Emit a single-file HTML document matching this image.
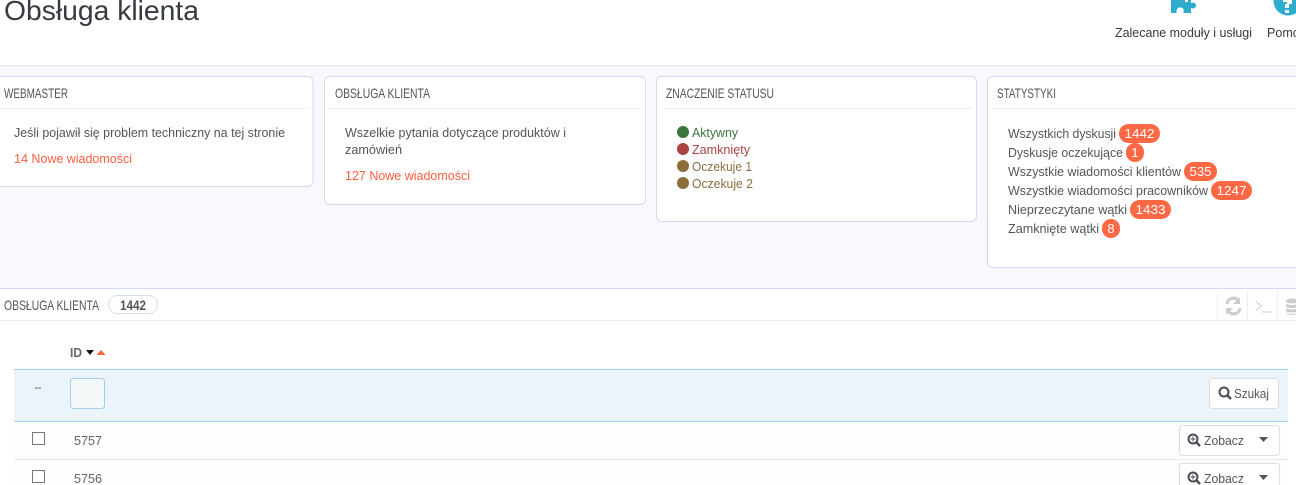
<!DOCTYPE html>
<html lang="pl">
<head>
<meta charset="utf-8">
<title>Obsługa klienta</title>
<style>
html,body{margin:0;padding:0;width:1296px;height:485px;overflow:hidden;background:#fff}
svg{display:block}
text{font-family:"Liberation Sans",sans-serif;font-size:13px;fill:#555}
.h{font-size:14px;fill:#555}
.o{fill:#ff5f3f}
.b{fill:#fff;font-size:13px;text-anchor:middle}
.card{fill:#fff;stroke:#d5daf2;stroke-width:1}
.badge{fill:#fe6845}
</style>
</head>
<body>
<svg width="1296" height="485" viewBox="0 0 1296 485" xmlns="http://www.w3.org/2000/svg">
<rect x="0" y="0" width="1296" height="485" fill="#fff"/>
<rect x="0" y="66" width="1296" height="223" fill="#f8f9ff"/>
<rect x="0" y="65" width="1296" height="1" fill="#dfe3ea"/>

<!-- header -->
<text x="4" y="20" style="font-size:28px;fill:#363a41" textLength="195" lengthAdjust="spacingAndGlyphs">Obsługa klienta</text>
<path d="M1171 0h20v13h-7.500v-2a3.500 3.500 0 0 0-7 0v2h-5.500z" fill="#2eacce"/>
<circle cx="1193" cy="5.500" r="3" fill="#2eacce"/>
<path d="M1177 11a3.500 3.500 0 1 1 7 0" fill="#fff"/>
<rect x="1185" y="0" width="3" height="2" fill="#fff"/>
<circle cx="1288" cy="1" r="14.500" fill="#2eacce"/>
<path d="M1283 0h9v4h-3v4h-4v-4h2v-2h-4z" fill="#fff"/>
<rect x="1285" y="10" width="4" height="3" fill="#fff"/>
<text x="1115" y="37" style="fill:#363a41" textLength="137" lengthAdjust="spacingAndGlyphs">Zalecane moduły i usługi</text>
<text x="1267" y="37" style="fill:#363a41" textLength="39" lengthAdjust="spacingAndGlyphs">Pomoc</text>

<!-- card 1 -->
<rect class="card" x="-20" y="76.500" width="333" height="110" rx="5"/>
<rect x="0" y="108" width="309" height="1" fill="#eeeff1"/>
<text class="h" x="4" y="98" textLength="64" lengthAdjust="spacingAndGlyphs">WEBMASTER</text>
<text x="14" y="137" textLength="271" lengthAdjust="spacingAndGlyphs">Jeśli pojawił się problem techniczny na tej stronie</text>
<text class="o" x="14" y="163" textLength="118" lengthAdjust="spacingAndGlyphs">14 Nowe wiadomości</text>

<!-- card 2 -->
<rect class="card" x="324.500" y="76.500" width="321" height="128" rx="5"/>
<rect x="330" y="108" width="310" height="1" fill="#eeeff1"/>
<text class="h" x="335" y="98" textLength="95" lengthAdjust="spacingAndGlyphs">OBSŁUGA KLIENTA</text>
<text x="345" y="137" textLength="221" lengthAdjust="spacingAndGlyphs">Wszelkie pytania dotyczące produktów i</text>
<text x="345" y="154" textLength="57" lengthAdjust="spacingAndGlyphs">zamówień</text>
<text class="o" x="345" y="180" textLength="125" lengthAdjust="spacingAndGlyphs">127 Nowe wiadomości</text>

<!-- card 3 -->
<rect class="card" x="656.500" y="76.500" width="320" height="145" rx="5"/>
<rect x="661" y="108" width="311" height="1" fill="#eeeff1"/>
<text class="h" x="666" y="98" textLength="108" lengthAdjust="spacingAndGlyphs">ZNACZENIE STATUSU</text>
<circle cx="683" cy="132" r="6" fill="#3c763d"/>
<circle cx="683" cy="149" r="6" fill="#a94442"/>
<circle cx="683" cy="166" r="6" fill="#8a6d3b"/>
<circle cx="683" cy="183" r="6" fill="#8a6d3b"/>
<text x="692" y="137" style="fill:#3c763d" textLength="46" lengthAdjust="spacingAndGlyphs">Aktywny</text>
<text x="692" y="154" style="fill:#a94442" textLength="58" lengthAdjust="spacingAndGlyphs">Zamknięty</text>
<text x="692" y="171" style="fill:#8a6d3b" textLength="60" lengthAdjust="spacingAndGlyphs">Oczekuje 1</text>
<text x="692" y="188" style="fill:#8a6d3b" textLength="61" lengthAdjust="spacingAndGlyphs">Oczekuje 2</text>

<!-- card 4 -->
<rect class="card" x="987.500" y="76.500" width="330" height="191" rx="5"/>
<rect x="992" y="108" width="304" height="1" fill="#eeeff1"/>
<text class="h" x="997" y="98" textLength="59" lengthAdjust="spacingAndGlyphs">STATYSTYKI</text>
<text x="1008" y="138" textLength="108" lengthAdjust="spacingAndGlyphs">Wszystkich dyskusji</text>
<text x="1008" y="157" textLength="115" lengthAdjust="spacingAndGlyphs">Dyskusje oczekujące</text>
<text x="1008" y="176" textLength="173" lengthAdjust="spacingAndGlyphs">Wszystkie wiadomości klientów</text>
<text x="1008" y="195" textLength="200" lengthAdjust="spacingAndGlyphs">Wszystkie wiadomości pracowników</text>
<text x="1008" y="214" textLength="119" lengthAdjust="spacingAndGlyphs">Nieprzeczytane wątki</text>
<text x="1008" y="233" textLength="91" lengthAdjust="spacingAndGlyphs">Zamknięte wątki</text>
<rect class="badge" x="1119" y="124" width="41" height="19" rx="9.500"/>
<rect class="badge" x="1126" y="143" width="18" height="19" rx="9"/>
<rect class="badge" x="1184" y="162" width="33" height="19" rx="9.500"/>
<rect class="badge" x="1211" y="181" width="41" height="19" rx="9.500"/>
<rect class="badge" x="1130" y="200" width="41" height="19" rx="9.500"/>
<rect class="badge" x="1102" y="219" width="18" height="19" rx="9"/>
<text class="b" x="1139.500" y="138" textLength="30" lengthAdjust="spacingAndGlyphs">1442</text>
<text class="b" x="1135" y="157">1</text>
<text class="b" x="1200.500" y="176" textLength="22" lengthAdjust="spacingAndGlyphs">535</text>
<text class="b" x="1231.500" y="195" textLength="30" lengthAdjust="spacingAndGlyphs">1247</text>
<text class="b" x="1150.500" y="214" textLength="30" lengthAdjust="spacingAndGlyphs">1433</text>
<text class="b" x="1111" y="233">8</text>

<!-- panel -->
<rect x="0" y="289" width="1296" height="196" fill="#fff"/>
<rect x="0" y="288" width="1296" height="1" fill="#d5daf2"/>
<rect x="0" y="320" width="1296" height="1" fill="#eeeff1"/>
<text class="h" x="4" y="310" textLength="95" lengthAdjust="spacingAndGlyphs">OBSŁUGA KLIENTA</text>
<rect x="108.500" y="295.500" width="49" height="18" rx="9" fill="#fff" stroke="#dcdfe3"/>
<text x="120" y="310" style="font-size:14px;font-weight:bold;fill:#555" textLength="26" lengthAdjust="spacingAndGlyphs">1442</text>

<rect x="1217" y="291" width="1" height="29" fill="#eeeff1"/>
<rect x="1247" y="291" width="1" height="29" fill="#eeeff1"/>
<rect x="1277" y="291" width="1" height="29" fill="#eeeff1"/>
<path d="M1227 304a6.500 6.500 0 0 1 11-4" fill="none" stroke="#ccc" stroke-width="3"/>
<path d="M1240 308a6.500 6.500 0 0 1-11 4" fill="none" stroke="#ccc" stroke-width="3"/>
<path d="M1240 297v7h-7zM1226 315v-7h7z" fill="#ccc"/>
<path d="M1255.500 301l6 5-6 5M1262 312h9" fill="none" stroke="#ccc" stroke-width="1"/>
<ellipse cx="1292" cy="301" rx="6" ry="2.500" fill="#ccc"/>
<path d="M1286 303.500c2 2 10 2 12 0v3c-2 2-10 2-12 0zM1286 308c2 2 10 2 12 0v3c-2 2-10 2-12 0zM1286 312.500c2 2 10 2 12 0v1c-2 2-10 2-12 0z" fill="#ccc"/>

<!-- table head -->
<text x="70" y="357" style="font-weight:bold;fill:#656565" textLength="12" lengthAdjust="spacingAndGlyphs">ID</text>
<path d="M86 350h8l-4 5z" fill="#111"/>
<path d="M96.500 355h9l-4.500-5z" fill="#ff5f3f"/>

<!-- filter row -->
<rect x="14" y="369" width="1274" height="53" fill="#ebf4fa"/>
<rect x="14" y="369" width="1274" height="1" fill="#a0d0eb"/>
<rect x="14" y="421" width="1274" height="1" fill="#a0d0eb"/>
<text x="34.500" y="391" style="font-size:11px;fill:#444" textLength="7">- -</text>
<rect x="70.500" y="378.500" width="34" height="30" rx="3" fill="#f5f8f9" stroke="#a0d0eb"/>
<rect x="1209.500" y="378.500" width="69" height="30" rx="3" fill="#fff" stroke="#dcdfe3"/>
<circle cx="1224" cy="392" r="4.500" fill="none" stroke="#4a4f55" stroke-width="2"/>
<path d="M1227.500 395.500l3.500 3.500" stroke="#4a4f55" stroke-width="2.500"/>
<text x="1234" y="398" style="fill:#555" textLength="35" lengthAdjust="spacingAndGlyphs">Szukaj</text>

<!-- rows -->
<rect x="14" y="422" width="1274" height="37" fill="#fcfdfe"/>
<rect x="14" y="459" width="1274" height="1" fill="#eaedef"/>
<rect x="14" y="460" width="1274" height="25" fill="#fcfdfe"/>

<rect x="32.500" y="432.500" width="12" height="12" fill="#fff" stroke="#777"/>
<rect x="32.500" y="470.500" width="12" height="12" fill="#fff" stroke="#777"/>
<text x="74" y="445" style="fill:#666" textLength="28" lengthAdjust="spacingAndGlyphs">5757</text>
<text x="74" y="483" style="fill:#666" textLength="28" lengthAdjust="spacingAndGlyphs">5756</text>

<rect x="1179.500" y="425.500" width="100" height="30" rx="3" fill="#fff" stroke="#dcdfe3"/>
<circle cx="1193" cy="439" r="4.500" fill="none" stroke="#4a4f55" stroke-width="2"/>
<path d="M1196.500 442.500l3.500 3.500" stroke="#4a4f55" stroke-width="2.500"/>
<path d="M1190.500 439h5M1193 436.500v5" stroke="#4a4f55" stroke-width="1"/>
<text x="1204" y="445" style="fill:#555" textLength="40" lengthAdjust="spacingAndGlyphs">Zobacz</text>
<path d="M1259 437h9l-4.500 5z" fill="#555"/>

<rect x="1179.500" y="463.500" width="100" height="30" rx="3" fill="#fff" stroke="#dcdfe3"/>
<circle cx="1193" cy="477" r="4.500" fill="none" stroke="#4a4f55" stroke-width="2"/>
<path d="M1196.500 480.500l3.500 3.500" stroke="#4a4f55" stroke-width="2.500"/>
<path d="M1190.500 477h5M1193 474.500v5" stroke="#4a4f55" stroke-width="1"/>
<text x="1204" y="483" style="fill:#555" textLength="40" lengthAdjust="spacingAndGlyphs">Zobacz</text>
<path d="M1259 475h9l-4.500 5z" fill="#555"/>
</svg>
</body>
</html>
